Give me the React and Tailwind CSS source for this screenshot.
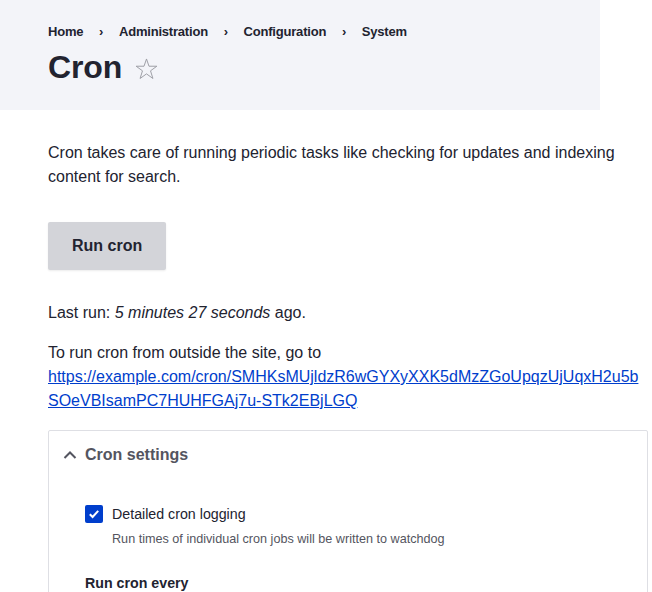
export default function App() {
  const font = { fontFamily: '"Liberation Sans", Arial, sans-serif' };
  return (
    <div className="w-[652px] min-h-[592px] bg-white text-[#222330]" style={font}>
      <div className="w-[600px] h-[110px] bg-[#f3f4f9] pl-12 pt-[24px]">
        <nav className="flex items-center text-[13px] font-bold leading-[16px] tracking-[-0.2px] text-[#222330]">
          <span>Home</span>
          <span className="mx-[15.75px]">›</span>
          <span>Administration</span>
          <span className="mx-[15.75px]">›</span>
          <span>Configuration</span>
          <span className="mx-[15.75px]">›</span>
          <span>System</span>
        </nav>
        <div className="flex items-center mt-[9px]">
          <h1 className="text-[32px] font-bold leading-[36px] tracking-[-0.1px]">Cron</h1>
          <svg className="ml-[13px] mt-[3px]" width="23" height="22" viewBox="0 0 24 23" fill="none" stroke="#9a9ba3" strokeWidth="1" strokeLinejoin="miter">
            <path d="M12 1 L14.6 8.6 L22.8 8.6 L16.2 13.4 L18.7 21.4 L12 16.6 L5.3 21.4 L7.8 13.4 L1.2 8.6 L9.4 8.6 Z" />
          </svg>
        </div>
      </div>
      <div className="pl-12 pr-1 pt-[31px] text-[16px] leading-[24px]">
        <p>Cron takes care of running periodic tasks like checking for updates and indexing content for search.</p>
        <button className="mt-[33px] h-12 px-6 bg-[#d3d4d9] rounded-[2px] font-bold text-[16px] leading-4 text-[#222330] shadow-[0_1px_2px_rgba(0,0,0,0.08)]">
          Run cron
        </button>
        <p className="mt-[31px]">
          Last run: <em>5 minutes 27 seconds</em> ago.
        </p>
        <p className="mt-4 break-words">
          To run cron from outside the site, go to{" "}
          <a href="#" className="text-[#003ecc] underline">https://example.com/cron/SMHKsMUjldzR6wGYXyXXK5dMzZGoUpqzUjUqxH2u5bSOeVBIsamPC7HUHFGAj7u-STk2EBjLGQ</a>
        </p>
        <div className="mt-[17px] w-[600px] border border-[#dedfe4] rounded-[2px] pb-6">
          <div className="flex items-center h-12 pl-[13px]">
            <svg width="16" height="16" viewBox="0 0 16 16" fill="none" stroke="#545560" strokeWidth="2" className="mr-[7px]">
              <path d="M2.5 11 L8 5.5 L13.5 11" />
            </svg>
            <span className="font-bold text-[#545560] text-[16px]">Cron settings</span>
          </div>
          <div className="pl-9 pt-[26px]">
            <label className="flex items-center">
              <span className="w-[18px] h-[18px] rounded-[2px] bg-[#003ecc] flex items-center justify-center">
                <svg width="12" height="12" viewBox="0 0 12 12" fill="none" stroke="white" strokeWidth="2">
                  <path d="M1.8 6.2 L4.6 9 L10.2 2.8" />
                </svg>
              </span>
              <span className="ml-[9px] text-[14.22px] leading-[18px]">Detailed cron logging</span>
            </label>
            <div className="ml-[27px] mt-[7px] text-[12.64px] leading-[18px] text-[#545560]">
              Run times of individual cron jobs will be written to watchdog
            </div>
            <div className="mt-[26px] font-bold text-[14.22px] leading-[18px]">Run cron every</div>
          </div>
        </div>
      </div>
    </div>
  );
}
